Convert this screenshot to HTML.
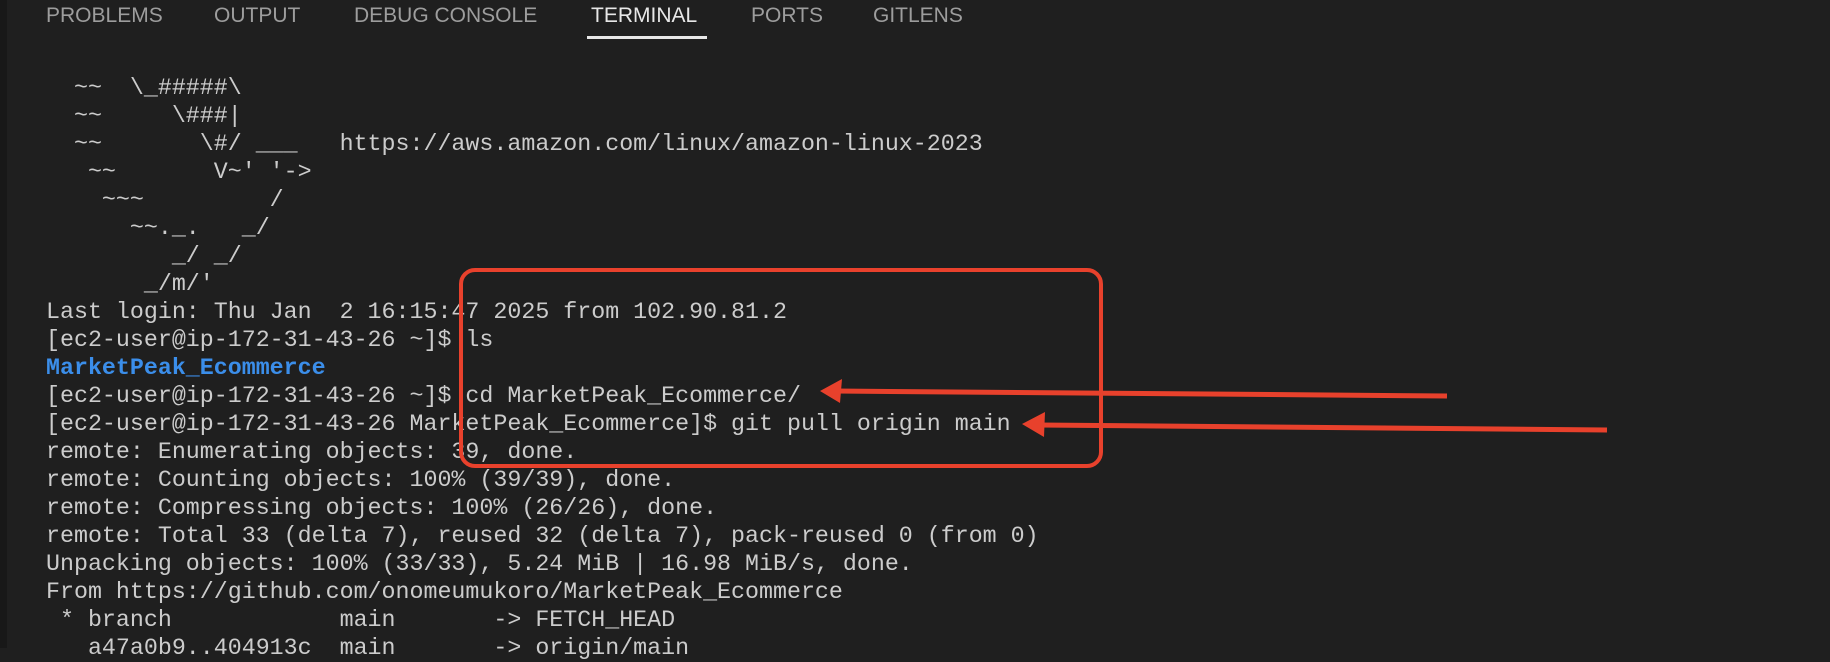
<!DOCTYPE html>
<html><head><meta charset="utf-8"><style>
html,body{margin:0;padding:0;}
body{width:1830px;height:648px;background:#1f1f1f;overflow:hidden;position:relative;}
.strip{position:absolute;left:0;top:0;width:7px;height:648px;background:#181818;}
.tab{position:absolute;top:4px;font-family:"Liberation Sans",sans-serif;font-size:21px;color:#9d9d9d;line-height:24px;}
.tab.act{color:#e7e7e7;}
.ul{position:absolute;left:587px;top:36px;width:120px;height:3px;background:#e7e7e7;}
pre{position:absolute;left:46px;top:74px;margin:0;font-family:"Liberation Mono",monospace;font-size:23.3px;line-height:28px;color:#cccccc;}
.b{color:#3b8eea;font-weight:bold;}
svg{position:absolute;left:0;top:0;}
</style></head><body>
<div class="strip"></div>
<div class="tab" style="left:46px">PROBLEMS</div>
<div class="tab" style="left:214px">OUTPUT</div>
<div class="tab" style="left:354px">DEBUG CONSOLE</div>
<div class="tab act" style="left:591px">TERMINAL</div>
<div class="tab" style="left:751px">PORTS</div>
<div class="tab" style="left:873px">GITLENS</div>
<div class="ul"></div>
<pre>  ~~  \_#####\
  ~~     \###|
  ~~       \#/ ___   https://aws.amazon.com/linux/amazon-linux-2023
   ~~       V~' '->
    ~~~         /
      ~~._.   _/
         _/ _/
       _/m/'
Last login: Thu Jan  2 16:15:47 2025 from 102.90.81.2
[ec2-user@ip-172-31-43-26 ~]$ ls
<span class="b">MarketPeak_Ecommerce</span>
[ec2-user@ip-172-31-43-26 ~]$ cd MarketPeak_Ecommerce/
[ec2-user@ip-172-31-43-26 MarketPeak_Ecommerce]$ git pull origin main
remote: Enumerating objects: 39, done.
remote: Counting objects: 100% (39/39), done.
remote: Compressing objects: 100% (26/26), done.
remote: Total 33 (delta 7), reused 32 (delta 7), pack-reused 0 (from 0)
Unpacking objects: 100% (33/33), 5.24 MiB | 16.98 MiB/s, done.
From https://github.com/onomeumukoro/MarketPeak_Ecommerce
 * branch            main       -&gt; FETCH_HEAD
   a47a0b9..404913c  main       -&gt; origin/main</pre>
<svg width="1830" height="648">
<rect x="461" y="270" width="640" height="196" rx="14" ry="14" fill="none" stroke="#e8412c" stroke-width="4"/>
<line x1="1447" y1="396" x2="835" y2="391" stroke="#e8412c" stroke-width="5"/>
<polygon points="820,391 842,379 840,403" fill="#e8412c"/>
<line x1="1607" y1="430" x2="1038" y2="425" stroke="#e8412c" stroke-width="5"/>
<polygon points="1022,424 1045,412 1044,437" fill="#e8412c"/>
</svg>
</body></html>
